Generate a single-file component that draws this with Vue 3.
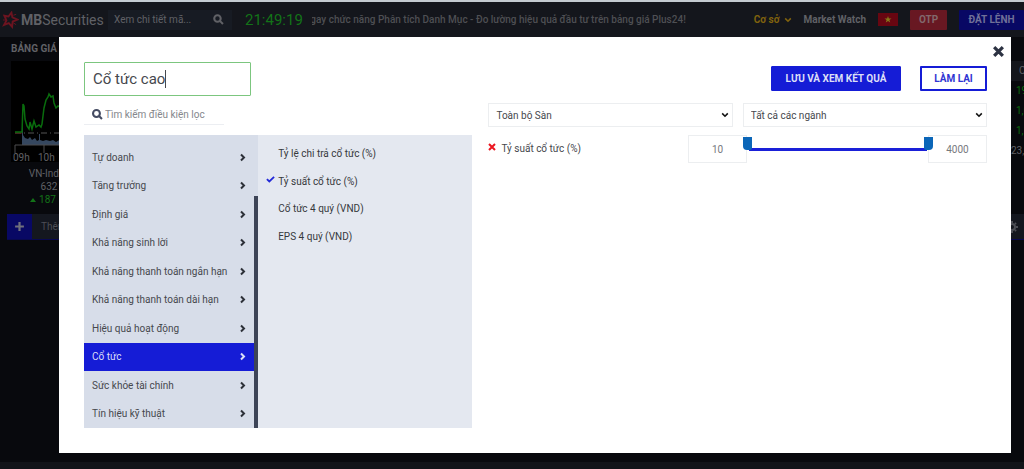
<script setup>
import { ref } from 'vue'

const stockQuery = ref('')
const filterName = ref('Cổ tức cao')
const conditionQuery = ref('')
const exchange = ref('all')
const industry = ref('all')
const minValue = ref(10)
const maxValue = ref(4000)
const activeCategory = ref('Cổ tức')
const picked = ref(['Tỷ suất cổ tức (%)'])

const categories = [
  'Tự doanh',
  'Tăng trưởng',
  'Định giá',
  'Khả năng sinh lời',
  'Khả năng thanh toán ngắn hạn',
  'Khả năng thanh toán dài hạn',
  'Hiệu quả hoạt động',
  'Cổ tức',
  'Sức khỏe tài chính',
  'Tín hiệu kỹ thuật',
]

const conditions = [
  'Tỷ lệ chi trả cổ tức (%)',
  'Tỷ suất cổ tức (%)',
  'Cổ tức 4 quý (VND)',
  'EPS 4 quý (VND)',
]
</script>

<template>
  <div class="page">
    <header class="topbar">
      <a class="brand" href="#" aria-label="MBSecurities">
        <svg class="brand-star" viewBox="0 0 18 18" aria-hidden="true">
          <path d="M2.500 4.500 6.800 5.300 10 1.200 11 6.200 16.300 8.600 11.300 10.600 10.700 16.200 7.200 12.300 2.200 14.200 4.700 9.500z" fill="none" stroke="#6c1420" stroke-width="2" />
          <path d="M1 9h4M12 4l3-1M12 12l3 2" stroke="#6c1420" stroke-width="1" />
        </svg>
        <span><b>MB</b>Securities</span>
      </a>
      <div class="stock-search">
        <input v-model="stockQuery" type="text" placeholder="Xem chi tiết mã..." aria-label="Xem chi tiết mã" />
        <button type="button" aria-label="Tìm">
          <svg viewBox="0 0 16 16"><circle cx="6.500" cy="6.500" r="4.700" /><path d="m10 10 4.500 4.500" /></svg>
        </button>
      </div>
      <time class="clock">21:49:19</time>
      <div class="ticker"><span>ngay chức năng Phân tích Danh Mục - Đo lường hiệu quả đầu tư trên bảng giá Plus24!</span></div>
      <nav class="topnav">
        <a class="market" href="#">Cơ sở
          <svg viewBox="0 0 10 10"><path d="m1.500 3 3.500 3.500L8.500 3" /></svg>
        </a>
        <a class="watch" href="#">Market Watch</a>
        <svg class="flag" viewBox="0 0 20 13" aria-hidden="true">
          <rect width="20" height="13" fill="#680611" />
          <path d="m10 3 .9 2.500h2.600l-2.100 1.600.8 2.500L10 8.100 7.800 9.600l.8-2.500-2.100-1.600h2.600z" fill="#86781a" />
        </svg>
        <button class="otp" type="button">OTP</button>
        <button class="order" type="button">ĐẶT LỆNH</button>
      </nav>
    </header>

    <main class="board">
      <section class="index-card">
        <h2>BẢNG GIÁ</h2>
        <svg class="chart" viewBox="0 0 76 101" aria-hidden="true">
          <rect width="76" height="101" fill="#000" />
          <path d="M11 84V60h1v14l2 3 3 1 2-2 2 3 3-2 2 3 2-1V73h1v6l3 1 3-1 4 1 3-1 3 2 5-3 4 1 4-1 6 1 6-1 9 1v5z" fill="#35475f" />
          <path d="M4 72h72" stroke="#555" stroke-dasharray="6 3 1 3" />
          <path d="M4 72h7" stroke="#5c1d18" />
          <path d="M4 71h7L12 43l1 2 1 13 2 7 2 3 1-7 2 7 2-8 2 6 3-2 2 2 1-3 2-16 2-8 2-3 1-3 2 3 2-1 1 7 2 5 2-2 2 1 1-6 2-2 3 3 3-4 6 5 8-4" fill="none" stroke="#096c0d" stroke-width="1.500" />
          <path d="M4 92v-8h72M33 84v8" fill="none" stroke="#4c4c4e" />
          <text x="2" y="100">09h</text>
          <text x="27" y="100">10h</text>
        </svg>
        <p>VN-Index</p>
        <p>632</p>
        <p class="change"><svg viewBox="0 0 6 4"><path d="M0 4 3 0l3 4z" /></svg>187 <i></i></p>
      </section>
      <section class="quotes">
        <span class="head">CL</span>
        <span>19,2</span>
        <span>1,05</span>
        <span>1,12</span>
        <span class="plain">23,4</span>
      </section>
    </main>
    <div class="tabs">
      <button class="add" type="button" aria-label="Thêm danh mục">
        <svg viewBox="0 0 10 10"><path d="M5 1v8M1 5h8" /></svg>
      </button>
      <span>Thêm mã</span>
      <svg class="gear" viewBox="0 0 12 12" aria-hidden="true"><circle cx="6" cy="6" r="3" /><path d="M6 0v2M6 10v2M0 6h2M10 6h2M2 2l1 1M9 9l1 1M10 2 9 3M3 9l-1 1" /></svg>
    </div>
    <footer class="statusbar"></footer>

    <div class="overlay">
      <section class="modal" role="dialog" aria-modal="true" aria-label="Bộ lọc">
        <button class="close" type="button" aria-label="Đóng">
          <svg viewBox="0 0 12 12"><path d="m2 2 8 8M10 2l-8 8" /></svg>
        </button>

        <div class="picker">
          <div class="name-box">
            <input v-model="filterName" type="text" aria-label="Tên bộ lọc" />
            <i class="caret"></i>
          </div>
          <label class="find">
            <svg viewBox="0 0 16 16"><circle cx="6.500" cy="6.500" r="5" /><path d="m10.300 10.300 4.200 4.200" /></svg>
            <input v-model="conditionQuery" type="text" placeholder="Tìm kiếm điều kiện lọc" aria-label="Tìm kiếm điều kiện lọc" />
          </label>
          <div class="panels">
            <div class="categories">
              <div class="list">
                <button
                  v-for="c in categories"
                  :key="c"
                  type="button"
                  :class="{ active: c === activeCategory }"
                  @click="activeCategory = c"
                >
                  {{ c }}
                  <svg viewBox="0 0 7 9"><path d="m2 1.500 3 3-3 3" /></svg>
                </button>
              </div>
              <div class="scrollbar"></div>
            </div>
            <div class="conditions">
              <label v-for="c in conditions" :key="c">
                <input v-model="picked" type="checkbox" :value="c" />
                <svg viewBox="0 0 10 10"><path d="m1 4.500 2.700 2.700L9 2" /></svg>
                <span>{{ c }}</span>
              </label>
            </div>
          </div>
        </div>

        <div class="criteria">
          <div class="actions">
            <button class="primary" type="button">LƯU VÀ XEM KẾT QUẢ</button>
            <button class="outline" type="button">LÀM LẠI</button>
          </div>
          <div class="selects">
            <div class="select">
              <select v-model="exchange" aria-label="Sàn"><option value="all">Toàn bộ Sàn</option></select>
              <svg viewBox="0 0 10 10"><path d="m1.500 3 3.500 3.500L8.500 3" /></svg>
            </div>
            <div class="select">
              <select v-model="industry" aria-label="Ngành"><option value="all">Tất cả các ngành</option></select>
              <svg viewBox="0 0 10 10"><path d="m1.500 3 3.500 3.500L8.500 3" /></svg>
            </div>
          </div>
          <div class="range-row">
            <button class="remove" type="button" aria-label="Xóa điều kiện">
              <svg viewBox="0 0 8 8"><path d="m1 1 6 6M7 1 1 7" /></svg>
            </button>
            <span class="range-label">Tỷ suất cổ tức (%)</span>
            <input v-model="minValue" class="number" type="text" aria-label="Giá trị nhỏ nhất" />
            <div class="slider">
              <div class="track"></div>
              <input v-model="minValue" class="low" type="range" min="10" max="4000" aria-label="Từ" />
              <input v-model="maxValue" class="high" type="range" min="10" max="4000" aria-label="Đến" />
            </div>
            <input v-model="maxValue" class="number" type="text" aria-label="Giá trị lớn nhất" />
          </div>
        </div>
      </section>
    </div>
  </div>
</template>

<style>
body {
  background: #08090d;
  font-family: Roboto, "Liberation Sans", sans-serif;
}
</style>

<style scoped>
* { box-sizing: border-box; }
button, input, select { font: inherit; color: inherit; }
button { padding: 0; border: 0; cursor: pointer; }
a { color: inherit; text-decoration: none; }
svg { display: block; flex: none; fill: none; stroke: currentColor; }

.page {
  display: flex;
  flex-direction: column;
  min-height: 100vh;
  overflow: hidden;
  color: #606166;
  background: #08090d;
  font-size: 10px;
}
.topbar {
  display: flex;
  align-items: center;
  height: 37px;
  padding-left: 2px;
  border-top: 2px solid #c4cbd0;
  background: #14161c;
}
.brand { display: flex; align-items: center; gap: 2px; width: 106px; font-size: 14px; }
.brand-star { width: 17px; height: 18px; }
.stock-search {
  display: flex;
  align-items: center;
  width: 124px;
  height: 20px;
  padding: 0 6px;
  background: #171b23;
}
.stock-search input { flex: 1; min-width: 0; padding: 0; border: 0; outline: 0; background: none; }
.stock-search input::placeholder { color: #606166; opacity: 1; }
.stock-search button { background: none; margin-right: 2px; }
.stock-search svg { width: 11px; height: 11px; stroke-width: 3; }
.clock { width: 67px; margin-left: 13px; color: #137318; font-size: 15px; }
.ticker {
  display: flex;
  justify-content: flex-end;
  flex: 1;
  min-width: 0;
  overflow: hidden;
  white-space: nowrap;
  color: #4e4f53;
  font-weight: 500;
}
.topnav { display: flex; align-items: center; margin-left: 68px; font-weight: 700; white-space: nowrap; }
.market { display: flex; align-items: center; gap: 4px; color: #80620d; }
.market svg { width: 8px; height: 8px; stroke-width: 2; }
.watch { margin-left: 12px; }
.flag { width: 20px; height: 13px; margin: 0 12px; stroke: none; }
.otp { width: 37px; height: 20px; border-radius: 1px; background: #681822; color: #82686c; }
.order { width: 65px; height: 20px; margin-left: 12px; border-radius: 1px; background: #080864; color: #707098; }

.board { display: flex; justify-content: space-between; height: 177px; padding-left: 11px; }
.index-card { width: 76px; text-align: center; }
.index-card h2 { margin: 5px 0 6px; font-size: 10px; line-height: 13px; text-align: left; white-space: nowrap; }
.index-card p { margin: 0; line-height: 13px; }
.chart { width: 76px; height: 101px; margin-bottom: 5px; stroke: none; }
.chart text { fill: #606166; font-size: 10px; }
.index-card .change { display: flex; align-items: center; justify-content: center; gap: 3px; color: #137318; font-size: 10px; }
.change svg { width: 6px; height: 4px; fill: currentColor; stroke: none; }
.change i { width: 9px; height: 9px; border-radius: 50%; background: #600860; }
.quotes { display: flex; flex-direction: column; width: 13px; padding-top: 24px; color: #086b0c; white-space: nowrap; }
.quotes span { height: 20px; line-height: 20px; padding-left: 5px; overflow: hidden; }
.quotes .head { background: #14161c; color: #606166; padding-left: 8px; }
.quotes .plain { color: #606166; padding-left: 0; }
.tabs {
  display: flex;
  align-items: center;
  height: 26px;
  margin-left: 7px;
  border-bottom: 1px solid #080850;
  background: #14171f;
  color: #4c4e55;
}
.add { display: grid; place-items: center; width: 25px; height: 25px; margin-right: 9px; background: #080864; color: #70707c; }
.add svg { width: 11px; height: 11px; stroke-width: 2; }
.gear { width: 12px; height: 12px; margin: 0 6px 0 auto; stroke-width: 2; }
.statusbar { height: 7px; margin-top: auto; background: #111318; }

/* dialog */
.overlay { position: fixed; inset: 0; padding: 37px 13px 16px 59px; }
.modal {
  position: relative;
  display: grid;
  grid-template-columns: 388fr 498fr;
  gap: 16px;
  padding: 25px;
  padding-right: 24px;
  background: #fff;
  color: #46484d;
}
.close { position: absolute; top: 8px; right: 6px; background: none; color: #2c3242; }
.close svg { width: 13px; height: 13px; stroke-width: 3; }
.name-box { position: relative; width: 167px; }
.name-box input {
  display: block;
  width: 100%;
  height: 34px;
  padding: 0 8px;
  border: 1px solid #7cc67f;
  border-radius: 1px;
  outline: 0;
  background: #fff;
  font-size: 15px;
}
.caret { position: absolute; top: 8px; left: 81px; width: 1px; height: 18px; background: #46484d; }
.find { display: flex; align-items: center; gap: 2px; width: 140px; height: 21px; margin-top: 8px; padding-left: 8px; border-bottom: 1px solid #eceef2; }
.find svg { width: 11px; height: 11px; color: #444b62; stroke-width: 3; }
.find input { flex: 1; min-width: 0; padding: 0; border: 0; outline: 0; background: none; }
.find input::placeholder { color: #85878c; opacity: 1; }
.panels { display: grid; grid-template-columns: 174fr 214fr; height: 293px; margin-top: 10px; background: #e4e8f0; }
.categories { display: flex; background: #d7dde9; }
.list { display: grid; grid-template-rows: repeat(10, 1fr); flex: 1; padding-top: 8px; }
.list button { display: flex; align-items: center; justify-content: space-between; padding: 0 8px; background: none; white-space: nowrap; }
.list svg { width: 7px; height: 9px; color: #2c3038; stroke-width: 2; }
.list .active { background: #151cd6; color: #dcdff6; }
.list .active svg { color: #dcdff6; }
.scrollbar { align-self: flex-end; width: 4px; height: 232px; background: #3d4457; }
.conditions { display: grid; grid-template-rows: repeat(4, 1fr); height: 110px; margin-top: 5px; padding-left: 8px; color: #36383c; }
.conditions label { display: flex; align-items: center; gap: 3px; }
.conditions input { appearance: none; width: 0; height: 0; margin: 0 -3px 0 0; }
.conditions svg { width: 9px; height: 9px; margin-bottom: 3px; color: #2329d8; stroke-width: 2; visibility: hidden; }
.conditions input:checked + svg { visibility: visible; }

.actions { display: flex; justify-content: flex-end; gap: 19px; padding-top: 4px; font-weight: 700; }
.actions button { height: 25px; border: 1px solid #151cd6; border-radius: 1px; white-space: nowrap; }
.primary { width: 130px; background: #151cd6; color: #dcdff6; }
.actions .outline { width: 67px; border-width: 2px; background: #fff; color: #3035d2; }
.selects { display: grid; grid-template-columns: 1fr 1fr; gap: 10px; margin-top: 12px; }
.select { display: grid; align-items: center; }
.select > * { grid-area: 1 / 1; }
.select select { width: 100%; height: 24px; padding: 0 7px; border: 1px solid #eceef0; appearance: none; outline: 0; background: #fff; }
.select svg { width: 8px; height: 8px; margin-right: 4px; justify-self: end; color: #111; stroke-width: 2; pointer-events: none; }
.range-row { display: flex; align-items: flex-start; height: 28px; margin-top: 8px; }
.remove { margin: 8px 5px 0 0; background: none; color: #ec1620; }
.remove svg { width: 8px; height: 8px; stroke-width: 2; }
.range-label { flex: 1; line-height: 28px; }
.number { width: 59px; height: 28px; padding: 0; border: 1px solid #eceef0; outline: 0; text-align: center; color: #77797e; }
.slider { position: relative; display: grid; width: 190px; height: 14px; margin: 2px -5px 0 -4px; }
.slider > * { grid-area: 1 / 1; }
.track { align-self: end; height: 3px; margin: 0 6px; background: #1a20d8; }
.slider input { appearance: none; width: 100%; height: 13px; margin: 0; background: none; pointer-events: none; }
.slider input::-webkit-slider-thumb { appearance: none; width: 9px; height: 13px; border-radius: 0 0 2px 4px; background: #0b66b8; pointer-events: auto; }
.slider .high::-webkit-slider-thumb { border-radius: 0 0 4px 2px; }
</style>
